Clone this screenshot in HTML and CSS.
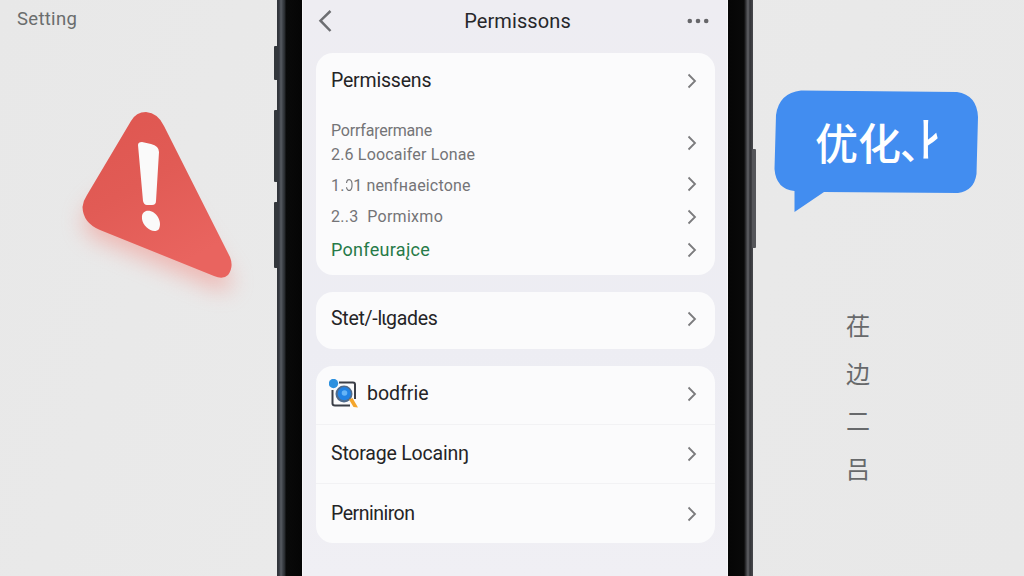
FILE: index.html
```html
<!DOCTYPE html>
<html lang="zh-CN">
<head>
<meta charset="utf-8">
<title>Permissons</title>
<link rel="stylesheet" href="styles.css">
</head>
<body>
<svg width="0" height="0" class="defs"><symbol id="chev" viewBox="0 0 10 16"><path d="M1.5 1.5 8 8 1.5 14.5" fill="none" stroke="#7b7b7d" stroke-width="1.8"/></symbol></svg>
<main class="stage">
  <section class="left">
    <span class="setting">Setting</span>
    <svg class="warning" viewBox="0 0 277 576" width="277" height="576">
      <defs>
        <linearGradient id="red" x1="0" y1="0" x2=".5" y2="1"><stop stop-color="#df5650"/><stop offset=".5" stop-color="#e15b55"/><stop offset="1" stop-color="#e9645f"/></linearGradient>
        <filter id="soft" x="-30%" y="-30%" width="160%" height="160%"><feGaussianBlur stdDeviation="11"/></filter>
      </defs>
      <path d="M91 206 151 160 231 278Q235 294 216 289L92 237Q76 223 91 206Z" fill="#f38b82" opacity=".52" filter="url(#soft)"/>
      <path d="M131 121Q136 112 146 112Q158 113 164 126L230 257Q234 267 228 275Q223 280 214 276L100 230Q83 223 82.500 207Q83 201 87 195Z" fill="url(#red)"/>
      <path d="M138 145Q138 142 142 142L151 144Q159 146 159 152L156 201Q156 205 152 205H147Q144 205 143 201Z" fill="#fafafa"/>
      <path d="M146 211C155 209 163 221 159 229C154 235 143 227 142 219Q141 213 146 211Z" fill="#fafafa"/>
    </svg>
  </section>

  <section class="phone">
    <i class="key k1"></i><i class="key k2"></i><i class="key k3"></i><i class="key k4"></i>
    <div class="screen">
      <header class="bar">
        <svg width="14" height="22" viewBox="0 0 14 22"><path d="M12.500 1 2.500 10.700 12.500 21" fill="none" stroke="#6d6e72" stroke-width="2.500"/></svg>
        <h1><span class="title">Permissons</span></h1>
        <svg width="22" height="6" viewBox="0 0 22 6" fill="#666669"><circle cx="2.800" cy="3" r="2.300"/><circle cx="11" cy="3" r="2.300"/><circle cx="19.200" cy="3" r="2.300"/></svg>
      </header>
      <div class="card card-a">
        <div class="row r1"><span class="t t1">Permissens</span><svg class="chev"><use href="#chev"/></svg></div>
        <div class="row r2"><div class="stack"><span class="s s1">Porrfaɼermane</span><span class="s s2">2.6 Loocaifer Lonae</span></div><svg class="chev"><use href="#chev"/></svg></div>
        <div class="row r3"><span class="s s3">1.<span class="flip">C</span>1 nenfнaeictone</span><svg class="chev"><use href="#chev"/></svg></div>
        <div class="row r4"><span class="s s4">2..3&nbsp; Pormixmo</span><svg class="chev"><use href="#chev"/></svg></div>
        <div class="row r5"><span class="s s5">Ponfeuraįce</span><svg class="chev"><use href="#chev"/></svg></div>
      </div>
      <div class="card card-b">
        <div class="row"><span class="t t2">Stet/-lɩgades</span><svg class="chev"><use href="#chev"/></svg></div>
      </div>
      <div class="card card-c">
        <div class="row">
          <svg class="app" width="30" height="30" viewBox="0 0 30 30">
            <path d="M10 3.500H24Q26 3.500 26 5.500V20M3.500 11V24.500Q3.500 26.500 6 26.500H21" fill="none" stroke="#3a3e47" stroke-width="2"/>
            <circle cx="15" cy="15" r="8.500" fill="#4f6b8c"/><circle cx="15.300" cy="14.700" r="6.600" fill="#2182e3"/><circle cx="15.500" cy="14" r="2.800" fill="#65b4f6"/>
            <circle cx="4.500" cy="4.500" r="4.700" fill="#2e91df"/>
            <path d="M20 20.500 23.500 19 29 28.500 24.500 28Z" fill="#f4a52b"/>
          </svg>
          <span class="t t3">bodfrie</span><svg class="chev"><use href="#chev"/></svg></div>
        <div class="row"><span class="t t4">Storage Locainŋ</span><svg class="chev"><use href="#chev"/></svg></div>
        <div class="row"><span class="t t5">Perniniron</span><svg class="chev"><use href="#chev"/></svg></div>
      </div>
    </div>
  </section>

  <section class="right">
    <div class="bubble">
      <svg class="bubble-bg" width="206" height="124" viewBox="0 0 206 124"><path d="M27 .5 183 2Q203 5 204 27L202.500 84Q200 101 184 103L50 102 20.500 122V101Q2 99 .5 79L2 25Q5 3 27 .5Z" fill="#428df0"/></svg>
      <span class="bubble-text">优化<span class="mark"><i>､</i><b>ﾄ</b></span></span>
    </div>
    <div class="vertical"><span>茌</span><span>边</span><span>二</span><span>吕</span></div>
  </section>
</main>
</body>
</html>
```
FILE: styles.css
```css
* { box-sizing: border-box; }
body { margin: 0; font-family: Roboto, "Noto Sans CJK SC", sans-serif; overflow: hidden; }
.defs { position: absolute; }
.stage { width: 1024px; height: 576px; display: grid; grid-template-columns: 277px 476px 271px; background: linear-gradient(110deg, #e8e8e8, #eaeaea 40%, #e8e8e8); }
.left { position: relative; padding: 9px 0 0 17px; }
.setting { display: block; font-size: 18.500px; line-height: 21px; color: #6a6d6d; letter-spacing: .3px; }
.warning { position: absolute; left: 0; top: 0; }
.phone { position: relative; height: 576px; padding: 0 25px; background: linear-gradient(90deg, #303338 0, #343840 2px, #585c62 4px, #3b3f45 6px, #25282b 8px, #090909 9px, #050505 25px, #050505 450px, #090909 467px, #4b4c50 470px, #626367 471px, #323337 473px, #48494d 476px); }
.key { position: absolute; width: 4px; background: #33373c; border-radius: 1px; }
.k1 { left: -3px; top: 46px; height: 34px; }
.k2 { left: -3px; top: 110px; height: 72px; }
.k3 { left: -3px; top: 202px; height: 66px; }
.k4 { right: -3px; top: 149px; height: 99px; background: #55565a; }
.screen { height: 576px; padding: 0 13px 0 13px; background: linear-gradient(#eeedf2, #ededf3 60%, #f0eff4); border-left: 1px solid #f7f7f9; border-right: 1px solid #f7f7f9; }
.bar { height: 53px; padding: 0 5px 11px 2px; display: flex; align-items: center; }
.bar h1 { flex: 1; margin: 0; padding-left: 16px; text-align: center; font-weight: 400; font-size: 20px; line-height: 24px; color: #27272a; }
.title { letter-spacing: .1px; }
.card { width: 399px; background: #fbfbfc; border-radius: 17px; overflow: hidden; }
.row { display: flex; align-items: center; padding: 0 18px 0 15px; }
.chev { width: 10px; height: 16px; margin-left: auto; flex: none; }
.card-a { height: 222px; padding-top: 2px; margin-bottom: 17px; }
.card-b { height: 57px; margin-bottom: 17px; }
.card-b .row { height: 54px; }
.card-c { height: 177px; }
.card-c .row { height: 59px; border-bottom: 1px solid #f2f2f4; padding-bottom: 2px; }
.card-c .row:nth-child(2) { padding-bottom: 0; }
.card-c .row:last-child { border: 0; padding-bottom: 0; }
.r1 { height: 51px; }
.r2 { height: 72px; padding-top: 1px; }
.r3 { height: 15px; }
.r3 .chev { margin-top: -3px; }
.r4 { height: 48px; }
.r5 { height: 17px; }
.stack { display: flex; flex-direction: column; }
.t { font-size: 19.500px; line-height: 24px; color: #242426; white-space: nowrap; }
.s { font-size: 16px; line-height: 24px; color: #747477; white-space: nowrap; }
.t1 { letter-spacing: -.2px; }
.t2 { letter-spacing: -.27px; }
.t4 { letter-spacing: -.2px; }
.t5 { letter-spacing: -.5px; }
.s1 { letter-spacing: -.2px; }
.s2 { letter-spacing: .17px; }
.s3 { letter-spacing: .17px; }
.s4 { letter-spacing: .3px; }
.s5 { font-size: 18px; color: #267a48; letter-spacing: .3px; }
.flip { display: inline-block; transform: scaleX(-.75); margin: 0 -1px; }
.app { margin: 0 8px 0 -2px; }
.right { position: relative; padding: 90px 0 0 21px; }
.bubble { position: relative; width: 206px; height: 124px; padding: 20px 0 0 41px; }
.bubble-bg { position: absolute; left: 0; top: 0; }
.bubble-text { position: relative; top: -1px; display: flex; font-family: "Noto Sans CJK SC", sans-serif; font-weight: 500; font-size: 43px; line-height: 64px; color: #fff; }
.mark { display: flex; height: 64px; padding-top: 3px; }
.mark i { width: 16px; font-size: 39px; line-height: 60px; font-style: normal; }
.mark b { font-weight: 500; font-size: 48px; line-height: 60px; transform: scaleY(-1); }
.vertical { width: 24px; margin: 87px 0 0 72px; display: flex; flex-direction: column; font-family: "Noto Sans CJK SC", sans-serif; font-size: 24px; line-height: 47.500px; color: #67696b; }
```
